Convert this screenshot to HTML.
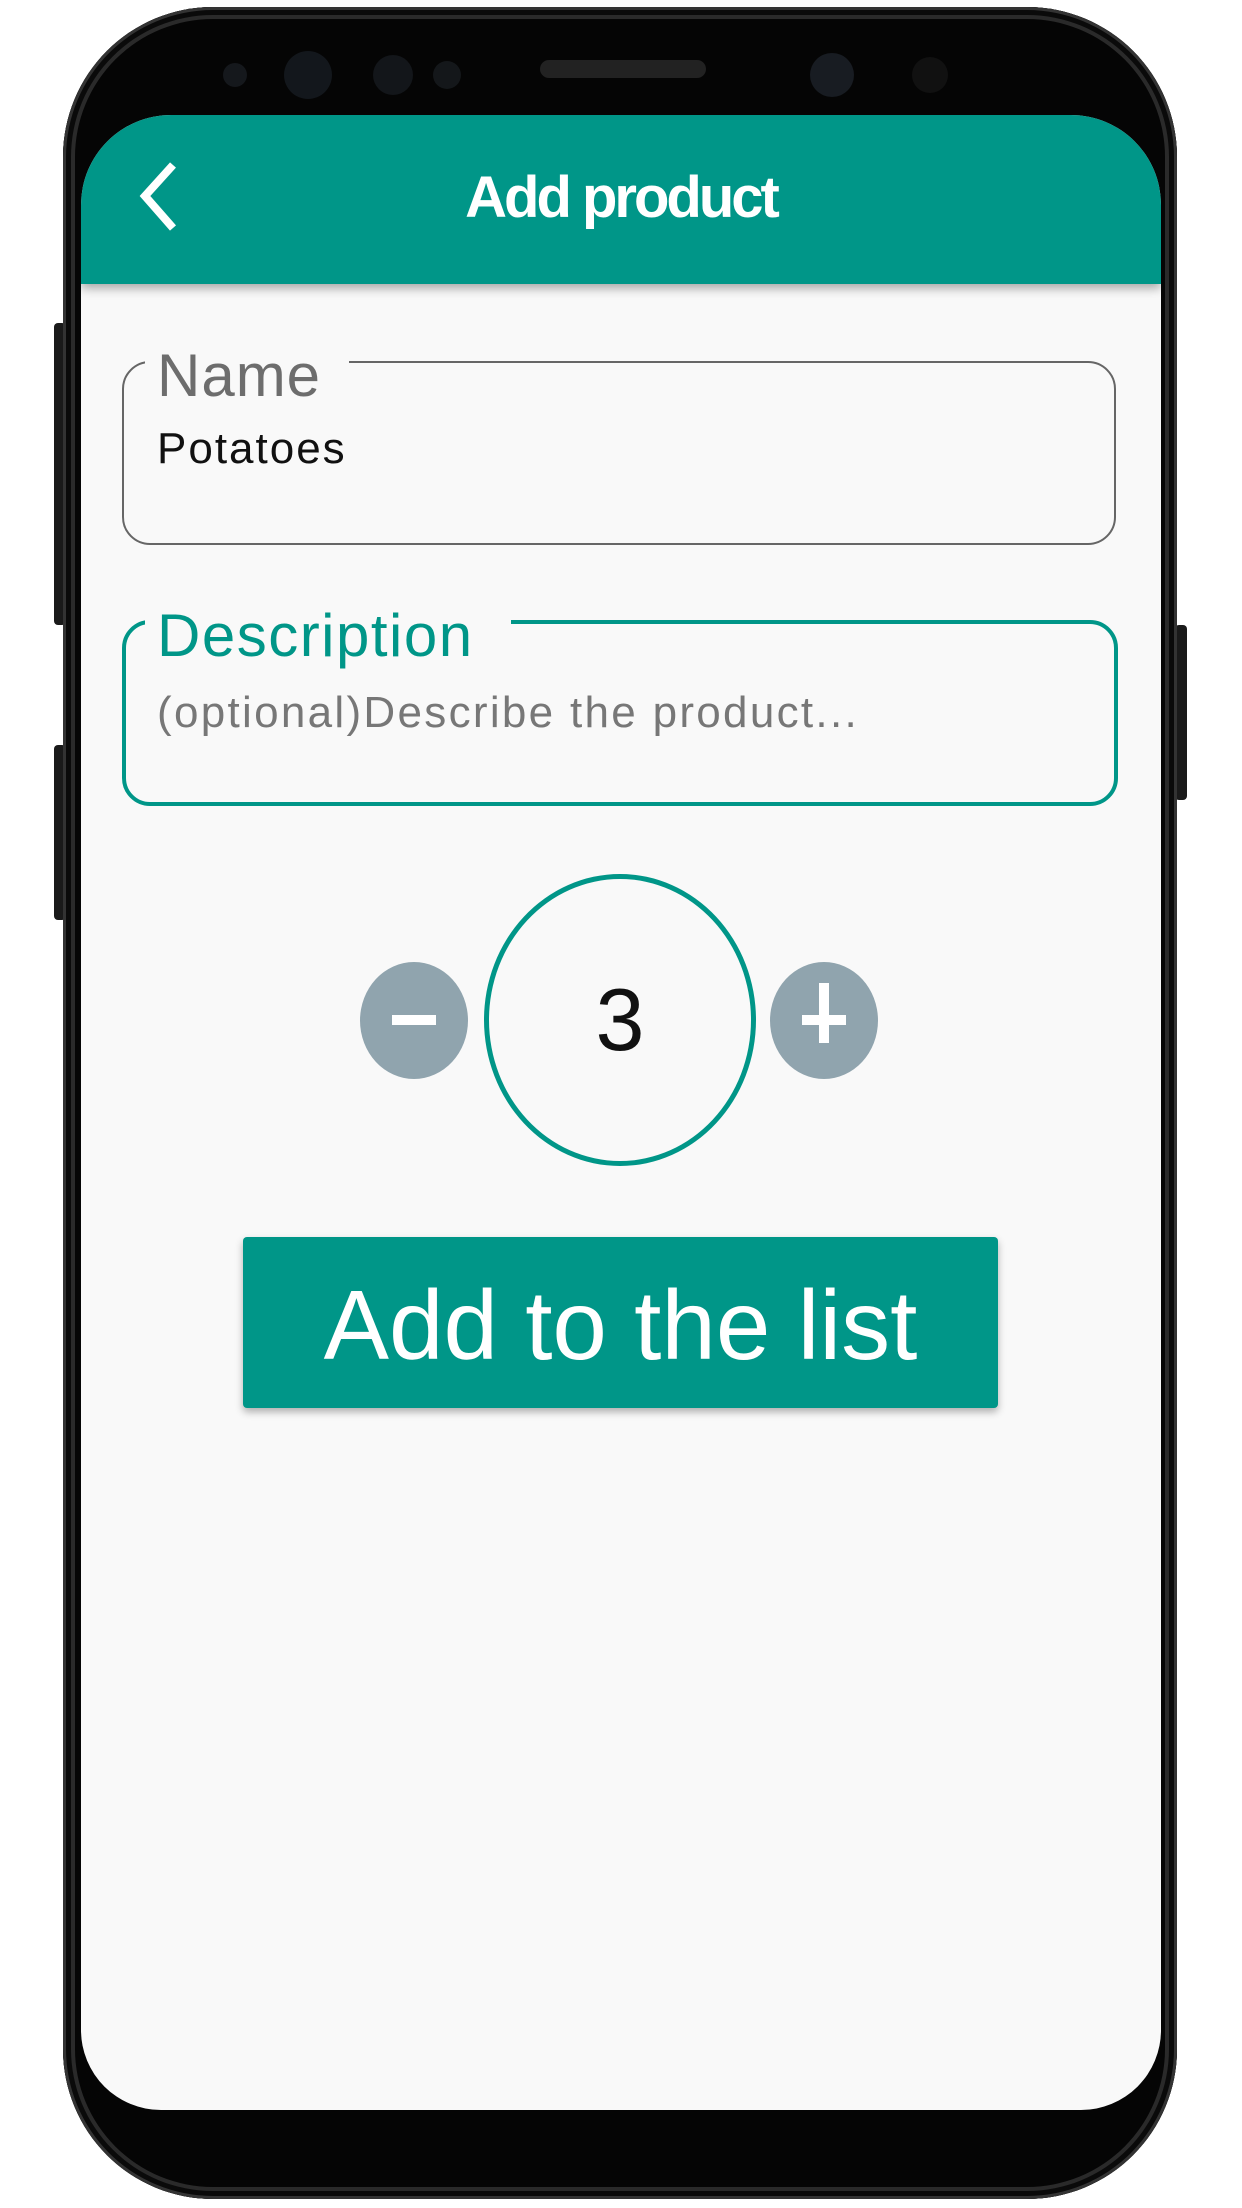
<!DOCTYPE html>
<html><head><meta charset="utf-8"><style>
html,body{margin:0;padding:0;background:#fff;}
body{width:1242px;height:2208px;position:relative;overflow:hidden;font-family:"Liberation Sans",sans-serif;}
.abs{position:absolute;}
.phone{left:63px;top:7px;width:1114px;height:2192px;border-radius:150px;background:#050505;box-shadow:inset 0 0 0 3px #333, inset 0 0 0 8px #0a0a0a, inset 0 0 0 12px #2a2a2a;}
.screen{left:81px;top:115px;width:1080px;height:1995px;background:#f9f9f9;border-radius:90px 90px 80px 80px;overflow:hidden;}
.header{left:0;top:0;width:1080px;height:169px;background:#009688;box-shadow:0 4px 10px rgba(0,0,0,0.35);}
.btnside{background:#1a1a1a;border-radius:4px;}
</style></head><body>
<div class="abs btnside" style="left:54px;top:323px;width:12px;height:302px"></div>
<div class="abs btnside" style="left:54px;top:745px;width:12px;height:175px"></div>
<div class="abs btnside" style="left:1175px;top:625px;width:12px;height:175px"></div>
<div class="abs phone"></div>
<div class="abs" style="left:223px;top:63px;width:24px;height:24px;border-radius:50%;background:#15181c"></div>
<div class="abs" style="left:284px;top:51px;width:48px;height:48px;border-radius:50%;background:#13171c"></div>
<div class="abs" style="left:373px;top:55px;width:40px;height:40px;border-radius:50%;background:#13161a"></div>
<div class="abs" style="left:433px;top:61px;width:28px;height:28px;border-radius:50%;background:#14171a"></div>
<div class="abs" style="left:540px;top:60px;width:166px;height:18px;border-radius:9px;background:#222"></div>
<div class="abs" style="left:810px;top:53px;width:44px;height:44px;border-radius:50%;background:#181c22"></div>
<div class="abs" style="left:912px;top:57px;width:36px;height:36px;border-radius:50%;background:#111"></div>
<div class="abs screen">
  <div class="abs header"></div>
  <svg class="abs" style="left:50px;top:45px" width="50" height="75"><path d="M42 5 L14 36 L42 68" fill="none" stroke="#fff" stroke-width="8"/></svg>
  <div class="abs" style="left:0;width:1080px;top:48px;text-align:center;color:#fff;font-size:58px;font-weight:bold;letter-spacing:-3px;line-height:70px">Add product</div>
  <div class="abs" style="left:41px;top:246px;width:990px;height:180px;border:2px solid #666;border-radius:28px"></div>
  <div class="abs" style="left:64px;top:220px;width:204px;height:40px;background:#f9f9f9"></div>
  <div class="abs" style="left:76px;top:226px;font-size:60px;color:#6d6d6d;line-height:70px;letter-spacing:1px">Name</div>
  <div class="abs" style="left:76px;top:308px;font-size:44px;color:#111;line-height:52px;letter-spacing:2px">Potatoes</div>
  <div class="abs" style="left:41px;top:505px;width:988px;height:178px;border:4px solid #009688;border-radius:28px"></div>
  <div class="abs" style="left:64px;top:490px;width:366px;height:40px;background:#f9f9f9"></div>
  <div class="abs" style="left:76px;top:486px;font-size:60px;color:#009688;line-height:70px;letter-spacing:1.5px">Description</div>
  <div class="abs" style="left:76px;top:572px;font-size:44px;color:#777;line-height:52px;letter-spacing:2.3px">(optional)Describe the product...</div>
  <div class="abs" style="left:279px;top:847px;width:108px;height:117px;border-radius:50%;background:#90a4ae"></div>
  <div class="abs" style="left:311px;top:900px;width:44px;height:10px;background:#fff"></div>
  <div class="abs" style="left:689px;top:847px;width:108px;height:117px;border-radius:50%;background:#90a4ae"></div>
  <div class="abs" style="left:721px;top:900px;width:44px;height:10px;background:#fff"></div>
  <div class="abs" style="left:738px;top:868px;width:10px;height:60px;background:#fff"></div>
  <div class="abs" style="left:403px;top:759px;width:272px;height:292px;border:5px solid #009688;border-radius:50%;box-sizing:border-box"></div>
  <div class="abs" style="left:403px;top:855px;width:272px;text-align:center;font-size:88px;color:#111;line-height:100px">3</div>
  <div class="abs" style="left:162px;top:1122px;width:755px;height:171px;background:#009688;border-radius:4px;box-shadow:0 4px 8px rgba(0,0,0,0.3)"></div>
  <div class="abs" style="left:162px;top:1150px;width:755px;text-align:center;color:#fff;font-size:98px;line-height:120px">Add to the list</div>
</div>
</body></html>
